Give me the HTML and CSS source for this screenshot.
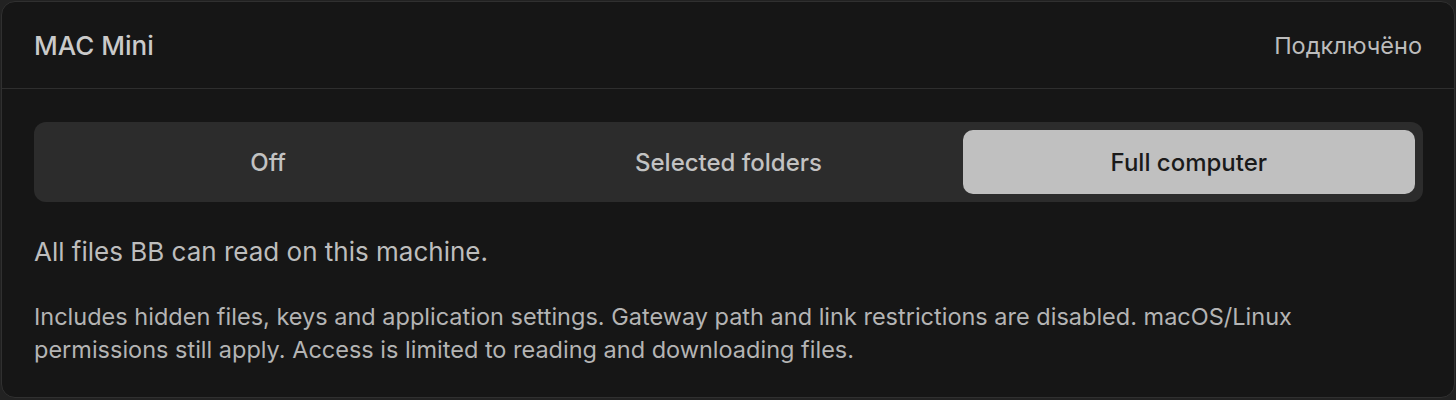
FILE: index.html
```html
<!DOCTYPE html>
<html lang="en">
<head>
<meta charset="utf-8">
<link rel="stylesheet" href="styles.css">
</head>
<body>
<div class="card">
  <div class="card-header">
    <div class="title">MAC Mini</div>
    <div class="status">Подключёно</div>
  </div>
  <div class="card-body">
    <div class="segmented">
      <div class="seg">Off</div>
      <div class="seg">Selected folders</div>
      <div class="seg active">Full computer</div>
    </div>
    <p class="lead">All files BB can read on this machine.</p>
    <p class="note">Includes hidden files, keys and application settings. Gateway path and link restrictions are disabled. macOS/Linux permissions still apply. Access is limited to reading and downloading files.</p>
  </div>
</div>
</body>
</html>
```

FILE: styles.css
```css
html, body {
  margin: 0;
  padding: 0;
  background: #222222;
  height: 100%;
}
body {
  padding: 1px;
  box-sizing: border-box;
  font-family: "Inter", "Noto Sans", sans-serif;
  color: #bdbdbd;
}
.card {
  background: #161616;
  border: 1px solid #303030;
  border-radius: 14px;
  height: 397px;
  box-sizing: border-box;
  overflow: hidden;
}
.card-header {
  display: flex;
  align-items: center;
  justify-content: space-between;
  height: 86px;
  padding: 0 32px;
  border-bottom: 1px solid #2e2e2e;
}
.title {
  font-size: 26px;
  font-weight: 500;
  color: #cacaca;
}
.status {
  font-size: 23.5px;
  font-weight: 400;
  color: #bcbcbc;
}
.card-body {
  padding: 33px 31px 0 32px;
}
.segmented {
  display: grid;
  grid-template-columns: 1fr 1fr 1fr;
  gap: 8px;
  padding: 8px;
  background: #2c2c2c;
  border-radius: 12px;
}
.seg {
  height: 64px;
  display: flex;
  align-items: center;
  justify-content: center;
  font-size: 24px;
  font-weight: 500;
  color: #c2c2c2;
  border-radius: 10px;
}
.seg.active {
  background: #c0c0c0;
  color: #1a1a1a;
}
.lead {
  margin: 34px 0 0;
  font-size: 26px;
  line-height: 32px;
  color: #bdbdbd;
}
.note {
  margin: 32px 0 0;
  max-width: 1320px;
  font-size: 23.5px;
  line-height: 33px;
  color: #b4b4b4;
}
```
